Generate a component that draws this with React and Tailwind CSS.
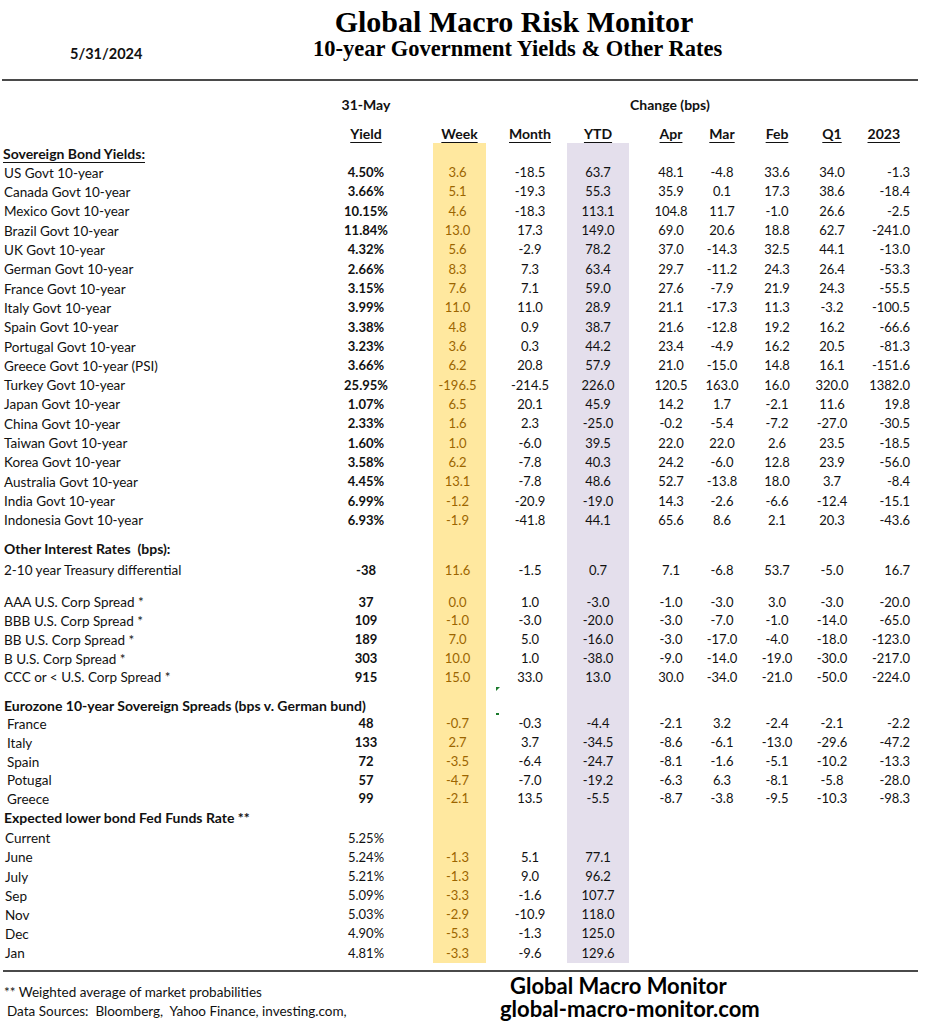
import React from "react";

const sov = [
  ["US Govt 10-year", "4.50%", "3.6", "-18.5", "63.7", "48.1", "-4.8", "33.6", "34.0", "-1.3"],
  ["Canada Govt 10-year", "3.66%", "5.1", "-19.3", "55.3", "35.9", "0.1", "17.3", "38.6", "-18.4"],
  ["Mexico Govt 10-year", "10.15%", "4.6", "-18.3", "113.1", "104.8", "11.7", "-1.0", "26.6", "-2.5"],
  ["Brazil Govt 10-year", "11.84%", "13.0", "17.3", "149.0", "69.0", "20.6", "18.8", "62.7", "-241.0"],
  ["UK Govt 10-year", "4.32%", "5.6", "-2.9", "78.2", "37.0", "-14.3", "32.5", "44.1", "-13.0"],
  ["German Govt 10-year", "2.66%", "8.3", "7.3", "63.4", "29.7", "-11.2", "24.3", "26.4", "-53.3"],
  ["France Govt 10-year", "3.15%", "7.6", "7.1", "59.0", "27.6", "-7.9", "21.9", "24.3", "-55.5"],
  ["Italy Govt 10-year", "3.99%", "11.0", "11.0", "28.9", "21.1", "-17.3", "11.3", "-3.2", "-100.5"],
  ["Spain Govt 10-year", "3.38%", "4.8", "0.9", "38.7", "21.6", "-12.8", "19.2", "16.2", "-66.6"],
  ["Portugal Govt 10-year", "3.23%", "3.6", "0.3", "44.2", "23.4", "-4.9", "16.2", "20.5", "-81.3"],
  ["Greece Govt 10-year (PSI)", "3.66%", "6.2", "20.8", "57.9", "21.0", "-15.0", "14.8", "16.1", "-151.6"],
  ["Turkey Govt 10-year", "25.95%", "-196.5", "-214.5", "226.0", "120.5", "163.0", "16.0", "320.0", "1382.0"],
  ["Japan Govt 10-year", "1.07%", "6.5", "20.1", "45.9", "14.2", "1.7", "-2.1", "11.6", "19.8"],
  ["China Govt 10-year", "2.33%", "1.6", "2.3", "-25.0", "-0.2", "-5.4", "-7.2", "-27.0", "-30.5"],
  ["Taiwan Govt 10-year", "1.60%", "1.0", "-6.0", "39.5", "22.0", "22.0", "2.6", "23.5", "-18.5"],
  ["Korea Govt 10-year", "3.58%", "6.2", "-7.8", "40.3", "24.2", "-6.0", "12.8", "23.9", "-56.0"],
  ["Australia Govt 10-year", "4.45%", "13.1", "-7.8", "48.6", "52.7", "-13.8", "18.0", "3.7", "-8.4"],
  ["India Govt 10-year", "6.99%", "-1.2", "-20.9", "-19.0", "14.3", "-2.6", "-6.6", "-12.4", "-15.1"],
  ["Indonesia Govt 10-year", "6.93%", "-1.9", "-41.8", "44.1", "65.6", "8.6", "2.1", "20.3", "-43.6"],
];

const corp = [
  ["AAA U.S. Corp Spread *", "37", "0.0", "1.0", "-3.0", "-1.0", "-3.0", "3.0", "-3.0", "-20.0"],
  ["BBB U.S. Corp Spread *", "109", "-1.0", "-3.0", "-20.0", "-3.0", "-7.0", "-1.0", "-14.0", "-65.0"],
  ["BB U.S. Corp Spread *", "189", "7.0", "5.0", "-16.0", "-3.0", "-17.0", "-4.0", "-18.0", "-123.0"],
  ["B U.S. Corp Spread *", "303", "10.0", "1.0", "-38.0", "-9.0", "-14.0", "-19.0", "-30.0", "-217.0"],
  ["CCC or < U.S. Corp Spread *", "915", "15.0", "33.0", "13.0", "30.0", "-34.0", "-21.0", "-50.0", "-224.0"],
];

const euro = [
  ["France", "48", "-0.7", "-0.3", "-4.4", "-2.1", "3.2", "-2.4", "-2.1", "-2.2"],
  ["Italy", "133", "2.7", "3.7", "-34.5", "-8.6", "-6.1", "-13.0", "-29.6", "-47.2"],
  ["Spain", "72", "-3.5", "-6.4", "-24.7", "-8.1", "-1.6", "-5.1", "-10.2", "-13.3"],
  ["Potugal", "57", "-4.7", "-7.0", "-19.2", "-6.3", "6.3", "-8.1", "-5.8", "-28.0"],
  ["Greece", "99", "-2.1", "13.5", "-5.5", "-8.7", "-3.8", "-9.5", "-10.3", "-98.3"],
];

const fed = [
  ["Current", "5.25%"],
  ["June", "5.24%", "-1.3", "5.1", "77.1"],
  ["July", "5.21%", "-1.3", "9.0", "96.2"],
  ["Sep", "5.09%", "-3.3", "-1.6", "107.7"],
  ["Nov", "5.03%", "-2.9", "-10.9", "118.0"],
  ["Dec", "4.90%", "-5.3", "-1.3", "125.0"],
  ["Jan", "4.81%", "-3.3", "-9.6", "129.6"],
];

function Row({ h, d = [], labelCls = "", yieldBold = true, header = false, monthExtra = null }) {
  const [label, y, w, m, ytd, apr, mar, feb, q1, y23] = d;
  return (
    <div className={`flex items-center ${h} text-[13px] text-[#111]`}>
      <div
        className={`w-[330px] shrink-0 whitespace-nowrap ${
          header ? "font-bold text-[14px]" : "text-[13.5px]"
        } ${labelCls}`}
      >
        {label}
      </div>
      <div className={`w-[72px] shrink-0 text-center ${yieldBold ? "font-bold" : ""}`}>{y}</div>
      <div className="w-[31px] shrink-0" />
      <div className="w-[53px] shrink-0 self-stretch flex items-center justify-center pr-[4px] bg-[#FFE89F] text-[#9C6500]">
        {w}
      </div>
      <div className="relative w-[81px] shrink-0 text-center pl-[7px] self-stretch flex items-center justify-center">
        {m}
        {monthExtra}
      </div>
      <div className="w-[62px] shrink-0 self-stretch flex items-center justify-center bg-[#E4DFEC]">{ytd}</div>
      <div className="w-[15px] shrink-0" />
      <div className="w-[54px] shrink-0 text-center">{apr}</div>
      <div className="w-[48px] shrink-0 text-center">{mar}</div>
      <div className="w-[62px] shrink-0 text-center">{feb}</div>
      <div className="w-[48px] shrink-0 text-center">{q1}</div>
      <div className="w-[54px] shrink-0 text-right">{y23}</div>
    </div>
  );
}

export default function App() {
  return (
    <div className="w-[938px] bg-white font-['Lato',sans-serif] text-[#111]">
      {/* Title block */}
      <div className="pt-[7px] pl-[90px] text-center font-['Liberation_Serif',serif] font-bold text-[30px] leading-[30px] text-black">
        Global Macro Risk Monitor
      </div>
      <div className="flex items-start">
        <div className="w-[313px] shrink-0 pl-[70px] pt-[10px] font-bold text-[14.5px] leading-[14.5px]">5/31/2024</div>
        <div className="font-['Liberation_Serif',serif] font-bold text-[22.5px] leading-[24px] text-black whitespace-nowrap">
          10-year Government Yields &amp; Other Rates
        </div>
      </div>
      <div className="mt-[17px] ml-[2px] w-[916px] h-[2px] bg-[#4a4a4a]" />

      {/* Column headings */}
      <div className="mt-[14.5px] flex h-[19px] items-center font-bold text-[14px]">
        <div className="w-[330px] shrink-0" />
        <div className="w-[72px] shrink-0 text-center">31-May</div>
        <div className="w-[228px] shrink-0" />
        <div>Change (bps)</div>
      </div>
      <div className="mt-[10px] flex h-[19px] items-center font-bold text-[14px] underline underline-offset-[3px] decoration-1">
        <div className="w-[330px] shrink-0" />
        <div className="w-[72px] shrink-0 text-center">Yield</div>
        <div className="w-[31px] shrink-0" />
        <div className="w-[53px] shrink-0 text-center">Week</div>
        <div className="w-[81px] shrink-0 text-center pl-[7px]">Month</div>
        <div className="w-[62px] shrink-0 text-center">YTD</div>
        <div className="w-[15px] shrink-0" />
        <div className="w-[54px] shrink-0 text-center">Apr</div>
        <div className="w-[48px] shrink-0 text-center">Mar</div>
        <div className="w-[62px] shrink-0 text-center">Feb</div>
        <div className="w-[48px] shrink-0 text-center">Q1</div>
        <div className="w-[54px] shrink-0 text-right pr-[10px]">2023</div>
      </div>

      {/* Body */}
      <div>
        <Row h="h-[20px]" header d={["Sovereign Bond Yields:"]} labelCls="pl-[3px] underline underline-offset-[3px] decoration-1" />
        {sov.map((r) => (
          <Row key={r[0]} h="h-[19.33px]" d={r} labelCls="pl-[4px]" />
        ))}
        <Row h="h-[8.7px]" />
        <Row h="h-[19px]" header d={["Other Interest Rates  (bps):"]} labelCls="pl-[4px] whitespace-pre" />
        <Row h="h-[3px]" />
        <Row h="h-[19px]" d={["2-10 year Treasury differential", "-38", "11.6", "-1.5", "0.7", "7.1", "-6.8", "53.7", "-5.0", "16.7"]} labelCls="pl-[4px]" />
        <Row h="h-[13.1px]" />
        {corp.map((r) => (
          <Row key={r[0]} h="h-[18.75px]" d={r} labelCls="pl-[4px]" />
        ))}
        <Row
          h="h-[9.25px]"
          monthExtra={
            <svg className="absolute left-[10px] top-[0px]" width="4" height="4" viewBox="0 0 4 4">
              <polygon points="0,0 4,0 0,4" fill="#1a7a2c" />
            </svg>
          }
        />
        <Row
          h="h-[18.75px]"
          header
          d={["Eurozone 10-year Sovereign Spreads (bps v. German bund)"]}
          labelCls="pl-[4px]"
          monthExtra={<span className="absolute left-[10px] bottom-[0px] w-[3px] h-[2px] bg-[#1a7a2c]" />}
        />
        {euro.map((r) => (
          <Row key={r[0]} h="h-[18.75px]" d={r} labelCls="pl-[7px]" />
        ))}
        <Row h="h-[18.75px]" header d={["Expected lower bond Fed Funds Rate **"]} labelCls="pl-[4px]" />
        <Row h="h-[1.55px]" />
        {fed.map((r) => (
          <Row key={r[0]} h="h-[19.17px]" d={r} yieldBold={false} labelCls="pl-[5px]" />
        ))}
      </div>

      {/* Footer */}
      <div className="mt-[7.5px] ml-[3px] w-[915px] h-[2px] bg-[#4a4a4a]" />
      <div className="flex items-start">
        <div className="w-[500px] shrink-0 mt-[10.5px] text-[13.5px] leading-[19px]">
          <div className="pl-[4px]">** Weighted average of market probabilities</div>
          <div className="pl-[7px] whitespace-pre">Data Sources:  Bloomberg,  Yahoo Finance, investing.com,</div>
        </div>
        <div className="mt-[3px] font-bold text-[22px] text-black">
          <div className="pl-[10px] leading-[22px]">Global Macro Monitor</div>
          <div className="leading-[23px]">global-macro-monitor.com</div>
        </div>
      </div>
    </div>
  );
}
